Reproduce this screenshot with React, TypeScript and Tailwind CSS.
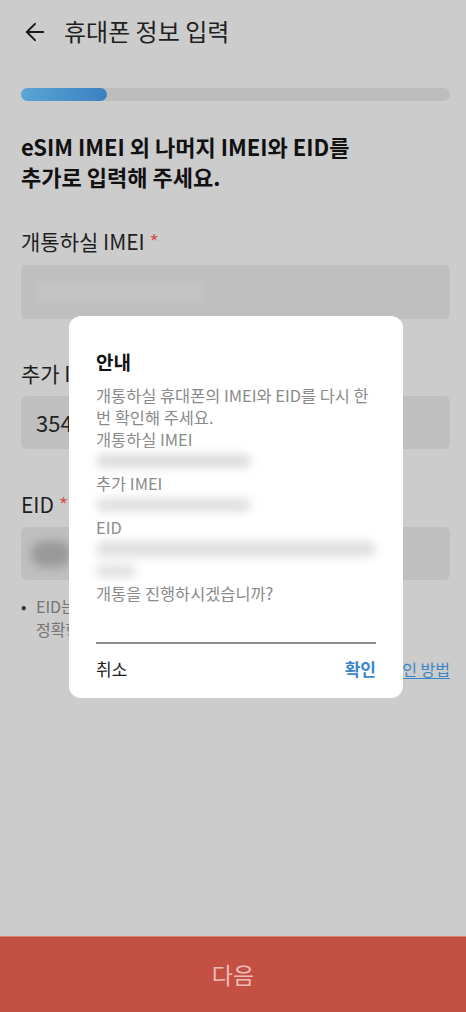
import { ArrowLeft } from 'lucide-react';

const font = { fontFamily: '"Noto Sans CJK KR", "Noto Sans", sans-serif' };

function Label({ text }: { text: string }) {
  return (
    <div className="text-[21px] leading-[26px] text-[#1f1f1f]">
      {text} <span className="text-[#d0584e] text-[20px]">*</span>
    </div>
  );
}

function Smudge({ className }: { className: string }) {
  return <div className={`rounded-full blur-[5px] ${className}`} />;
}

export default function App() {
  return (
    <div style={font} className="relative w-[466px] h-[1012px] bg-[#cccccc] flex flex-col overflow-hidden">
      {/* Header */}
      <div className="h-[64px] flex items-center pl-[21px] gap-[15px]">
        <ArrowLeft size={28} strokeWidth={1.7} className="text-[#1a1a1a]" />
        <h1 className="text-[24px] text-[#1f1f1f] leading-none pb-[2px]">휴대폰 정보 입력</h1>
      </div>

      <div className="flex-1 pl-[21px] pr-[16px] flex flex-col">
        {/* Progress */}
        <div className="mt-[24px] h-[13px] rounded-full bg-[#bdbdbd]">
          <div className="h-full w-[86px] rounded-full bg-gradient-to-r from-[#5aa6d4] to-[#3b80c2]" />
        </div>

        <p className="mt-[30px] text-[22px] leading-[30px] font-bold text-[#111111]">
          eSIM IMEI 외 나머지 IMEI와 EID를
          <br />
          추가로 입력해 주세요.
        </p>

        <div className="mt-[37px]">
          <Label text="개통하실 IMEI" />
        </div>
        <div className="mt-[10px] h-[54px] rounded-[6px] bg-[#bfbfbf] flex items-center px-[14px]">
          <Smudge className="w-[170px] h-[20px] bg-[#c4c4c4]" />
        </div>

        <div className="mt-[41px]">
          <Label text="추가 IMEI" />
        </div>
        <div className="mt-[9px] h-[53px] rounded-[6px] bg-[#bfbfbf] flex items-center px-[15px]">
          <span className="text-[22px] text-[#222222]">354123456789012</span>
        </div>

        <div className="mt-[42px]">
          <Label text="EID" />
        </div>
        <div className="mt-[9px] h-[53px] rounded-[6px] bg-[#bfbfbf] flex items-center px-[10px]">
          <Smudge className="w-[40px] h-[26px] bg-[#999999]" />
        </div>

        <div className="mt-[15px] flex gap-[8px] text-[16px] leading-[23px] text-[#747474]">
          <span className="w-[7px] text-[#333333]">•</span>
          <p>
            EID는 휴대폰 설정에서 확인할 수 있어요.
            <br />
            정확한 EID를 입력해 주세요.
          </p>
        </div>

        <div className="mt-[17px] flex justify-end">
          <span className="text-[16px] leading-[22px] text-[#3a86c8] underline underline-offset-2">EID 확인 방법</span>
        </div>
      </div>

      {/* Bottom button */}
      <button className="h-[76px] w-full bg-[#c44f43] border-t border-[#d98372] text-[23px] text-[#ecbcb5]">
        다음
      </button>

      {/* Modal */}
      <div className="absolute left-[69px] top-[316px] w-[334px] h-[382px] bg-white rounded-[12px] px-[27px] pt-[33px] flex flex-col">
        <h2 className="text-[19px] leading-[26px] font-bold text-[#111111]">안내</h2>
        <div className="mt-[9px] text-[16.4px] leading-[22px] text-[#8a8a8a] whitespace-nowrap">
          <p>개통하실 휴대폰의 IMEI와 EID를 다시 한</p>
          <p>번 확인해 주세요.</p>
          <p>개통하실 IMEI</p>
          <div className="h-[22px] flex items-center">
            <Smudge className="w-[155px] h-[14px] bg-[#dcdcdc]" />
          </div>
          <p>추가 IMEI</p>
          <div className="h-[22px] flex items-center">
            <Smudge className="w-[155px] h-[14px] bg-[#e0e0e0]" />
          </div>
          <p>EID</p>
          <div className="h-[22px] flex items-center">
            <Smudge className="w-[282px] h-[16px] bg-[#e0e0e0]" />
          </div>
          <div className="h-[22px] flex items-center">
            <Smudge className="w-[40px] h-[14px] bg-[#e2e2e2]" />
          </div>
          <p>개통을 진행하시겠습니까?</p>
        </div>
        <div className="mt-[38px] h-[2px] bg-[#8c8c8c]" />
        <div className="mt-[13px] flex items-center justify-between text-[17px] leading-[24px]">
          <span className="text-[#1a1a1a]">취소</span>
          <span className="font-bold text-[#3a86c8]">확인</span>
        </div>
      </div>
    </div>
  );
}
